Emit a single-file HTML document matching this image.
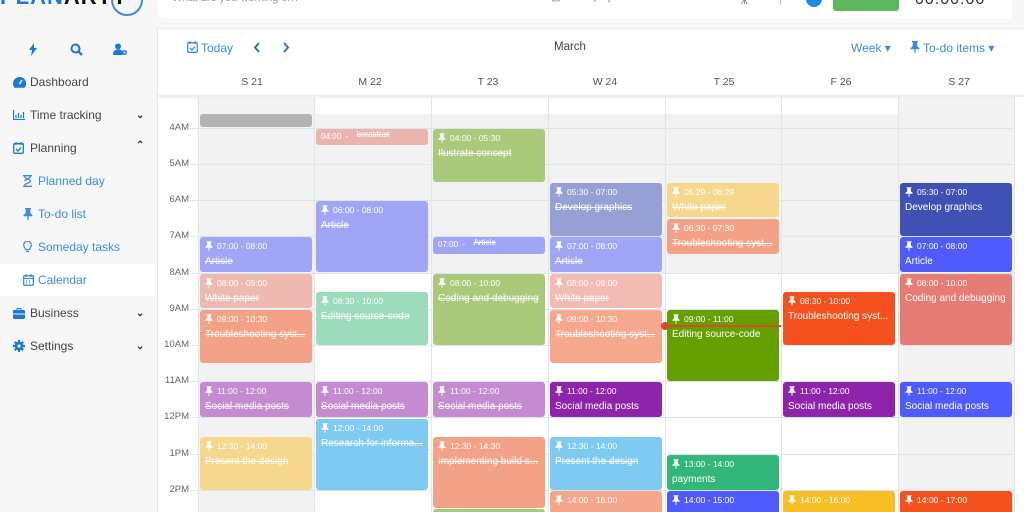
<!DOCTYPE html>
<html><head><meta charset="utf-8"><style>
*{box-sizing:border-box;margin:0;padding:0}
html,body{width:1024px;height:512px;overflow:hidden}
body{background:#f7f7f7;font-family:"Liberation Sans",sans-serif;position:relative}
.abs{position:absolute}
.side{left:0;top:0;width:157px;height:512px;background:#f7f7f7}
.mi{position:absolute;left:0;width:157px;height:32px;font-size:12px;color:#444;display:flex;align-items:center}
.mi svg{position:absolute;left:13px}
.mi span{position:absolute;left:30px}
.sub span{left:38px;color:#3d8be0}
.sub svg{left:23px}
.chev{position:absolute;left:136px;font-size:10px;color:#333}
.main{left:157px;top:28px;width:867px;height:484px;background:#fff;border-top:1px solid #e4e8ea;border-left:1px solid #e4e8ea}
.hl{position:absolute;left:190px;width:824px;height:1px;background:#dbe6ec}
.vl{position:absolute;top:96px;width:1px;height:416px;background:#e2e4e6}
.tl{position:absolute;left:158px;width:31px;text-align:right;font-size:9.5px;color:#666}
.dh{position:absolute;top:76px;width:116px;text-align:center;font-size:10.5px;color:#555}
.e{position:absolute;width:112px;border-radius:3px;color:#fff;overflow:hidden;white-space:nowrap}
.e .t{position:absolute;left:5px;top:4px;font-size:8.5px;display:flex;align-items:center;gap:4px}
.e .n{position:absolute;left:5px;top:19px;font-size:10px;width:104px;overflow:hidden;text-overflow:ellipsis}
.s .n{text-decoration:line-through}
</style></head><body>
<svg width="0" height="0" style="position:absolute"><defs>
<symbol id="pin" viewBox="0 0 10 12"><path d="M2 0h6v1.5H7l.5 4 2 1.5v1.2H5.6V12h-1.2V8.2H.5V7l2-1.5L3 1.5H2z" fill="currentColor"/></symbol>
</defs></svg>

<!-- sidebar -->
<div class="abs side"></div>
<div class="abs" style="left:0;top:-16px;font-size:22px;font-weight:bold;color:#1e77d6;letter-spacing:1px">PLAN<span style="color:#111">ARTY</span></div>
<div class="abs" style="left:111px;top:-16px;width:32px;height:32px;border:2px solid #3d8be0;border-radius:50%"></div>
<div class="abs" style="left:158px;top:0;width:854px;height:18px;background:#fff;border-radius:0 0 4px 4px"></div>
<div class="abs" style="left:172px;top:-8px;font-size:11px;color:#999">What are you working on?</div>
<div class="abs" style="left:551px;top:-8px;font-size:10px;color:#777">▤ Select project</div>
<div class="abs" style="left:741px;top:-7px;font-size:12px;color:#777">⩚</div>
<div class="abs" style="left:778px;top:-7px;font-size:12px;color:#777">⫯</div>
<div class="abs" style="left:806px;top:-9px;width:16px;height:16px;border-radius:50%;background:#1e88e5"></div>
<div class="abs" style="left:833px;top:-4px;width:66px;height:15px;background:#5cb85c;border-radius:3px"></div>
<div class="abs" style="left:915px;top:-9px;font-size:16px;color:#333;letter-spacing:1px">00:00:00</div>

<svg class="abs" style="left:28px;top:43px" width="10" height="13" viewBox="0 0 10 13"><path d="M6 0L1 7h3l-1 6 6-8H6z" fill="#1e77d6"/></svg>
<svg class="abs" style="left:70px;top:43px" width="13" height="13" viewBox="0 0 13 13"><circle cx="5.5" cy="5.5" r="4" fill="none" stroke="#1e77d6" stroke-width="2"/><path d="M8.5 8.5l3.5 3.5" stroke="#1e77d6" stroke-width="2.4"/></svg>
<svg class="abs" style="left:113px;top:43px" width="15" height="13" viewBox="0 0 15 13"><circle cx="5" cy="3.5" r="3" fill="#1e77d6"/><path d="M0 12c0-4 2-5.5 5-5.5s4 1 4.5 2V12z" fill="#1e77d6"/><circle cx="11.5" cy="9.5" r="2.5" fill="#1e77d6"/><circle cx="11.5" cy="9.5" r="1" fill="#f7f7f7"/></svg>

<div class="mi" style="top:66px"><svg width="13" height="11" viewBox="0 0 13 11"><path d="M6.5 0A6.5 6.5 0 0 0 0 6.5c0 1.6.6 3.1 1.5 4.3h10A6.5 6.5 0 0 0 6.5 0z" fill="#1e77d6"/><path d="M6.5 7L9 3" stroke="#f7f7f7" stroke-width="1.4"/></svg><span>Dashboard</span></div>
<div class="mi" style="top:99px"><svg width="12" height="10" viewBox="0 0 12 10"><path d="M.5 0v9.5H12M3 8V5M5.5 8V3M8 8V5M10.5 8V2" stroke="#1e77d6" stroke-width="1.2" fill="none"/></svg><span>Time tracking</span><b class="chev">⌄</b></div>
<div class="mi" style="top:132px"><svg width="11" height="12" viewBox="0 0 11 12"><rect x=".7" y="1.7" width="9.6" height="9.6" rx="1" fill="none" stroke="#1e77d6" stroke-width="1.3"/><path d="M3 0v3M8 0v3M3 7l2 2 3-3.5" stroke="#1e77d6" stroke-width="1.3" fill="none"/></svg><span>Planning</span><b class="chev" style="top:8px">⌃</b></div>
<div class="mi sub" style="top:165px"><svg width="9" height="12" viewBox="0 0 9 12"><path d="M0 .7h9M0 11.3h9M1.5 1c0 3 5.5 3 6 5s-6 2-6 5M7.5 1c0 3-5.5 3-6 5" stroke="#3d8be0" stroke-width="1.3" fill="none"/></svg><span>Planned day</span></div>
<div class="mi sub" style="top:198px"><svg width="10" height="12" style="color:#3d8be0"><use href="#pin"/></svg><span>To-do list</span></div>
<div class="mi sub" style="top:231px"><svg width="9" height="12" viewBox="0 0 9 12"><path d="M2.5 8.5C2 6.5.7 5.8.7 4a3.8 3.8 0 0 1 7.6 0c0 1.8-1.3 2.5-1.8 4.5zM3 10.5h3" stroke="#3d8be0" stroke-width="1.2" fill="none"/></svg><span>Someday tasks</span></div>
<div class="mi sub" style="top:264px;background:#fff"><svg width="11" height="12" viewBox="0 0 11 12"><rect x=".7" y="1.7" width="9.6" height="9.6" rx="1" fill="none" stroke="#3d8be0" stroke-width="1.3"/><path d="M3 0v3M8 0v3M.7 4.5h9.6M3 7h1M6 7h1M3 9h1M6 9h1" stroke="#3d8be0" stroke-width="1.2"/></svg><span>Calendar</span></div>
<div class="mi" style="top:297px"><svg width="12" height="11" viewBox="0 0 12 11"><path d="M4 2V.5h4V2" stroke="#1e77d6" fill="none"/><rect y="2" width="12" height="9" rx="1.2" fill="#1e77d6"/><path d="M0 6h12" stroke="#f7f7f7"/></svg><span>Business</span><b class="chev">⌄</b></div>
<div class="mi" style="top:330px"><svg width="12" height="12" viewBox="0 0 12 12"><circle cx="6" cy="6" r="4.3" fill="#1e77d6"/><path d="M6 0v12M0 6h12M1.8 1.8l8.4 8.4M10.2 1.8l-8.4 8.4" stroke="#1e77d6" stroke-width="2.2"/><circle cx="6" cy="6" r="1.6" fill="#f7f7f7"/></svg><span>Settings</span><b class="chev">⌄</b></div>

<!-- main -->
<div class="abs main"></div>
<svg class="abs" style="left:187px;top:41px" width="11" height="12" viewBox="0 0 11 12"><rect x=".7" y="1.7" width="9.6" height="9.6" rx="1" fill="none" stroke="#3d8be0" stroke-width="1.3"/><path d="M3 0v3M8 0v3M3 7l2 2 3-3.5" stroke="#3d8be0" stroke-width="1.3" fill="none"/></svg>
<div class="abs" style="left:201px;top:41px;font-size:12px;color:#3d8be0">Today</div>
<svg class="abs" style="left:253px;top:42px" width="8" height="11"><path d="M6 1L2 5.5 6 10" stroke="#2a6fc9" stroke-width="2" fill="none"/></svg>
<svg class="abs" style="left:282px;top:42px" width="8" height="11"><path d="M2 1l4 4.5L2 10" stroke="#2a6fc9" stroke-width="2" fill="none"/></svg>
<div class="abs" style="left:554px;top:41px;font-size:11.5px;color:#444">March</div>
<div class="abs" style="left:851px;top:41px;font-size:12px;color:#3d8be0">Week ▾</div>
<svg class="abs" style="left:910px;top:41px;color:#3d8be0" width="10" height="12"><use href="#pin"/></svg>
<div class="abs" style="left:923px;top:41px;font-size:12px;color:#3d8be0">To-do items ▾</div>

<div class="dh" style="left:194px">S 21</div><div class="dh" style="left:312px">M 22</div><div class="dh" style="left:430px">T 23</div><div class="dh" style="left:547px">W 24</div><div class="dh" style="left:666px">T 25</div><div class="dh" style="left:783px">F 26</div><div class="dh" style="left:901px">S 27</div>
<div class="abs" style="left:158px;top:95px;width:866px;height:2px;background:#eee;box-shadow:0 1px 3px rgba(0,0,0,.08)"></div>

<!-- backgrounds -->
<div class="abs" style="left:198px;top:97px;width:116px;height:415px;background:#f2f2f2"></div>
<div class="abs" style="left:898px;top:97px;width:116px;height:415px;background:#f2f2f2"></div>
<div class="abs" style="left:314px;top:114px;width:584px;height:159px;background:#f2f2f2"></div>
<div class="abs" style="left:158px;top:114px;width:40px;height:398px;background:#fff"></div>

<div class="hl" style="top:128px"></div><div class="hl" style="top:164px"></div><div class="hl" style="top:200px"></div><div class="hl" style="top:236px"></div><div class="hl" style="top:273px"></div><div class="hl" style="top:309px"></div><div class="hl" style="top:345px"></div><div class="hl" style="top:381px"></div><div class="hl" style="top:417px"></div><div class="hl" style="top:454px"></div><div class="hl" style="top:490px"></div>
<div class="vl" style="left:198px;background:#dde8ee"></div><div class="vl" style="left:314px"></div><div class="vl" style="left:431px"></div><div class="vl" style="left:548px"></div><div class="vl" style="left:665px"></div><div class="vl" style="left:781px"></div><div class="vl" style="left:898px"></div><div class="vl" style="left:1014px"></div>
<div class="abs" style="left:1015px;top:97px;width:9px;height:415px;background:#fff"></div>

<div class="tl" style="top:122px">4AM</div><div class="tl" style="top:158px">5AM</div><div class="tl" style="top:194px">6AM</div><div class="tl" style="top:230px">7AM</div><div class="tl" style="top:267px">8AM</div><div class="tl" style="top:303px">9AM</div><div class="tl" style="top:339px">10AM</div><div class="tl" style="top:375px">11AM</div><div class="tl" style="top:411px">12PM</div><div class="tl" style="top:448px">1PM</div><div class="tl" style="top:484px">2PM</div>

<!-- events -->
<div class="e" style="left:200px;top:114px;height:13px;background:#b3b3b3"></div>
<div class="e s" style="left:200px;top:237px;height:35px;background:#a0a6f5"><div class="t"><svg width="8" height="10"><use href="#pin"/></svg>07:00 - 08:00</div><div class="n">Article</div></div>
<div class="e s" style="left:200px;top:274px;height:34px;background:#edb9b1"><div class="t"><svg width="8" height="10"><use href="#pin"/></svg>08:00 - 09:00</div><div class="n">White paper</div></div>
<div class="e s" style="left:200px;top:310px;height:53px;background:#f4a287"><div class="t"><svg width="8" height="10"><use href="#pin"/></svg>09:00 - 10:30</div><div class="n">Troubleshooting syst...</div></div>
<div class="e s" style="left:200px;top:382px;height:35px;background:#c48bd0"><div class="t"><svg width="8" height="10"><use href="#pin"/></svg>11:00 - 12:00</div><div class="n">Social media posts</div></div>
<div class="e s" style="left:200px;top:437px;height:53px;background:#f5d78e"><div class="t"><svg width="8" height="10"><use href="#pin"/></svg>12:30 - 14:00</div><div class="n">Present the design</div></div>

<div class="e s" style="left:316px;top:129px;height:16px;background:#ebb5ae"><div class="t" style="top:3px;font-size:8px">04:00 &nbsp;- &nbsp;<span style="text-decoration:line-through;position:relative;top:-2px">breakfast</span></div></div>
<div class="e s" style="left:316px;top:201px;height:71px;background:#a0a6f5"><div class="t"><svg width="8" height="10"><use href="#pin"/></svg>06:00 - 08:00</div><div class="n">Article</div></div>
<div class="e s" style="left:316px;top:292px;height:53px;background:#9ddbbd"><div class="t"><svg width="8" height="10"><use href="#pin"/></svg>08:30 - 10:00</div><div class="n">Editing source-code</div></div>
<div class="e s" style="left:316px;top:382px;height:35px;background:#c48bd0"><div class="t"><svg width="8" height="10"><use href="#pin"/></svg>11:00 - 12:00</div><div class="n">Social media posts</div></div>
<div class="e s" style="left:316px;top:419px;height:71px;background:#7fcaf2"><div class="t"><svg width="8" height="10"><use href="#pin"/></svg>12:00 - 14:00</div><div class="n">Research for informa...</div></div>

<div class="e s" style="left:433px;top:129px;height:53px;background:#abc97a"><div class="t"><svg width="8" height="10"><use href="#pin"/></svg>04:00 - 05:30</div><div class="n">Ilustrate concept</div></div>
<div class="e s" style="left:433px;top:237px;height:17px;background:#a0a6f5"><div class="t" style="top:3px;font-size:8px">07:00 &nbsp;- &nbsp;<span style="text-decoration:line-through;position:relative;top:-2px">Article</span></div></div>
<div class="e s" style="left:433px;top:274px;height:71px;background:#abc97a"><div class="t"><svg width="8" height="10"><use href="#pin"/></svg>08:00 - 10:00</div><div class="n">Coding and debugging</div></div>
<div class="e s" style="left:433px;top:382px;height:35px;background:#c48bd0"><div class="t"><svg width="8" height="10"><use href="#pin"/></svg>11:00 - 12:00</div><div class="n">Social media posts</div></div>
<div class="e s" style="left:433px;top:437px;height:71px;background:#f4a287"><div class="t"><svg width="8" height="10"><use href="#pin"/></svg>12:30 - 14:30</div><div class="n">Implementing build s...</div></div>
<div class="e" style="left:433px;top:509px;height:10px;background:#abc97a"></div>

<div class="e s" style="left:550px;top:183px;height:53px;background:#97a0d4"><div class="t"><svg width="8" height="10"><use href="#pin"/></svg>05:30 - 07:00</div><div class="n">Develop graphics</div></div>
<div class="e s" style="left:550px;top:237px;height:35px;background:#a0a6f5"><div class="t"><svg width="8" height="10"><use href="#pin"/></svg>07:00 - 08:00</div><div class="n">Article</div></div>
<div class="e s" style="left:550px;top:274px;height:34px;background:#f2bbb3"><div class="t"><svg width="8" height="10"><use href="#pin"/></svg>08:00 - 09:00</div><div class="n">White paper</div></div>
<div class="e s" style="left:550px;top:310px;height:53px;background:#f6a78d"><div class="t"><svg width="8" height="10"><use href="#pin"/></svg>09:00 - 10:30</div><div class="n">Troubleshooting syst...</div></div>
<div class="e" style="left:550px;top:382px;height:35px;background:#8e24aa"><div class="t"><svg width="8" height="10"><use href="#pin"/></svg>11:00 - 12:00</div><div class="n">Social media posts</div></div>
<div class="e s" style="left:550px;top:437px;height:53px;background:#7fcaf2"><div class="t"><svg width="8" height="10"><use href="#pin"/></svg>12:30 - 14:00</div><div class="n">Present the design</div></div>
<div class="e" style="left:550px;top:491px;height:30px;background:#f6a68c"><div class="t"><svg width="8" height="10"><use href="#pin"/></svg>14:00 - 16:00</div></div>

<div class="e s" style="left:667px;top:183px;height:34px;background:#f5d78e"><div class="t"><svg width="8" height="10"><use href="#pin"/></svg>05:29 - 06:29</div><div class="n">White paper</div></div>
<div class="e s" style="left:667px;top:219px;height:35px;background:#f4a287"><div class="t"><svg width="8" height="10"><use href="#pin"/></svg>06:30 - 07:30</div><div class="n">Troubleshooting syst...</div></div>
<div class="e" style="left:667px;top:310px;height:71px;background:#66a000"><div class="t"><svg width="8" height="10"><use href="#pin"/></svg>09:00 - 11:00</div><div class="n">Editing source-code</div></div>
<div class="e" style="left:667px;top:455px;height:35px;background:#33b679"><div class="t"><svg width="8" height="10"><use href="#pin"/></svg>13:00 - 14:00</div><div class="n">payments</div></div>
<div class="e" style="left:667px;top:491px;height:30px;background:#4f5bff"><div class="t"><svg width="8" height="10"><use href="#pin"/></svg>14:00 - 15:00</div></div>

<div class="e" style="left:783px;top:292px;height:53px;background:#f4511e"><div class="t"><svg width="8" height="10"><use href="#pin"/></svg>08:30 - 10:00</div><div class="n">Troubleshooting syst...</div></div>
<div class="e" style="left:783px;top:382px;height:35px;background:#8e24aa"><div class="t"><svg width="8" height="10"><use href="#pin"/></svg>11:00 - 12:00</div><div class="n">Social media posts</div></div>
<div class="e" style="left:783px;top:491px;height:30px;background:#f6bf26"><div class="t"><svg width="8" height="10"><use href="#pin"/></svg>14:00 - 16:00</div></div>

<div class="e" style="left:900px;top:183px;height:53px;background:#3f51b5"><div class="t"><svg width="8" height="10"><use href="#pin"/></svg>05:30 - 07:00</div><div class="n">Develop graphics</div></div>
<div class="e" style="left:900px;top:237px;height:35px;background:#4f5bff"><div class="t"><svg width="8" height="10"><use href="#pin"/></svg>07:00 - 08:00</div><div class="n">Article</div></div>
<div class="e" style="left:900px;top:274px;height:71px;background:#e67c73"><div class="t"><svg width="8" height="10"><use href="#pin"/></svg>08:00 - 10:00</div><div class="n">Coding and debugging</div></div>
<div class="e" style="left:900px;top:382px;height:35px;background:#4f5bff"><div class="t"><svg width="8" height="10"><use href="#pin"/></svg>11:00 - 12:00</div><div class="n">Social media posts</div></div>
<div class="e" style="left:900px;top:491px;height:30px;background:#f4511e"><div class="t"><svg width="8" height="10"><use href="#pin"/></svg>14:00 - 17:00</div></div>

<!-- now line -->
<div class="abs" style="left:665px;top:325px;width:116px;height:1.5px;background:#d84a2a"></div>
<div class="abs" style="left:661px;top:322px;width:8px;height:8px;border-radius:50%;background:#d84a2a"></div>
</body></html>
